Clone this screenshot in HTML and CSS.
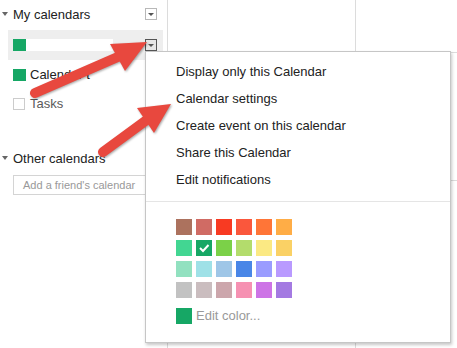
FILE: index.html
```html
<!DOCTYPE html>
<html>
<head>
<meta charset="utf-8">
<link rel="stylesheet" href="styles.css">
</head>
<body>
<div class="app">
  <aside class="sidebar">
    <div class="sec-head">
      <span class="tri"></span>
      <span class="sec-title">My calendars</span>
      <span class="ddbox"></span>
    </div>
    <div class="cal-row selected">
      <span class="chip green"></span>
      <span class="redact"></span>
      <span class="ddbox dark"></span>
    </div>
    <div class="cal-row">
      <span class="chip green"></span>
      <span class="cal-name">Calendar t</span>
    </div>
    <div class="cal-row">
      <span class="chip empty"></span>
      <span class="cal-name muted">Tasks</span>
    </div>
    <div class="sec-head other">
      <span class="tri"></span>
      <span class="sec-title">Other calendars</span>
    </div>
    <div class="friend-input">Add a friend's calendar</div>
  </aside>
  <main class="grid">
    <div class="cell"></div><div class="cell"></div>
    <div class="cell"></div><div class="cell"></div>
    <div class="cell"></div><div class="cell"></div>
  </main>
</div>

<div class="menu">
  <div class="menu-item">Display only this Calendar</div>
  <div class="menu-item">Calendar settings</div>
  <div class="menu-item">Create event on this calendar</div>
  <div class="menu-item">Share this Calendar</div>
  <div class="menu-item">Edit notifications</div>
  <div class="divider"></div>
  <div class="swatches">
    <span class="sw" style="background:#ac725e"></span>
    <span class="sw" style="background:#d06b64"></span>
    <span class="sw" style="background:#f83a22"></span>
    <span class="sw" style="background:#fa573c"></span>
    <span class="sw" style="background:#ff7537"></span>
    <span class="sw" style="background:#ffad46"></span>
    <span class="sw" style="background:#42d692"></span>
    <span class="sw" style="background:#16a765"><svg class="check" width="16" height="16" viewBox="0 0 16 16"><polyline points="4,8 7,11 12.5,5" fill="none" stroke="#fff" stroke-width="2"/></svg></span>
    <span class="sw" style="background:#7bd148"></span>
    <span class="sw" style="background:#b3dc6c"></span>
    <span class="sw" style="background:#fbe983"></span>
    <span class="sw" style="background:#fad165"></span>
    <span class="sw" style="background:#92e1c0"></span>
    <span class="sw" style="background:#9fe1e7"></span>
    <span class="sw" style="background:#9fc6e7"></span>
    <span class="sw" style="background:#4986e7"></span>
    <span class="sw" style="background:#9a9cff"></span>
    <span class="sw" style="background:#b99aff"></span>
    <span class="sw" style="background:#c2c2c2"></span>
    <span class="sw" style="background:#cabdbf"></span>
    <span class="sw" style="background:#cca6ac"></span>
    <span class="sw" style="background:#f691b2"></span>
    <span class="sw" style="background:#cd74e6"></span>
    <span class="sw" style="background:#a47ae2"></span>
  </div>
  <div class="edit-color">
    <span class="sw green"></span>
    <span class="edit-text">Edit color...</span>
  </div>
</div>

<svg class="arrows" width="457" height="348" viewBox="0 0 457 348">
  <g class="arrow">
    <line x1="35" y1="93" x2="120" y2="56" stroke="#e8483e" stroke-width="10" stroke-linecap="round"/>
    <polygon points="147,42 125,71 110,44" fill="#e8483e"/>
  </g>
  <g class="arrow">
    <line x1="103" y1="152" x2="148" y2="119" stroke="#e8483e" stroke-width="10" stroke-linecap="round"/>
    <polygon points="171,104 154,133 137,108" fill="#e8483e"/>
  </g>
</svg>
</body>
</html>
```

FILE: styles.css
```css
* { box-sizing: border-box; }
html, body { margin: 0; padding: 0; }
body {
  width: 457px;
  height: 348px;
  overflow: hidden;
  background: #fff;
  font-family: "Liberation Sans", Arial, sans-serif;
  font-size: 13px;
  color: #222;
  position: relative;
}
.app {
  display: flex;
  width: 457px;
  height: 348px;
  overflow: hidden;
}
.sidebar {
  width: 167px;
  flex: none;
  display: flex;
  flex-direction: column;
}
.sec-head {
  height: 28px;
  margin-bottom: 2px;
  display: flex;
  align-items: center;
  padding-left: 2px;
  padding-right: 10px;
}
.sec-head.other {
  margin-top: 26px;
  margin-bottom: 1px;
}
.tri {
  width: 0;
  height: 0;
  border-left: 3px solid transparent;
  border-right: 3px solid transparent;
  border-top: 4px solid #666;
  margin-right: 5px;
}
.sec-title {
  flex: 1;
  color: #222;
  white-space: nowrap;
}
.ddbox {
  width: 12px;
  height: 12px;
  border: 1px solid #b8b8b8;
  background: #fff;
  display: flex;
  align-items: center;
  justify-content: center;
  flex: none;
}
.ddbox::after {
  content: "";
  width: 0;
  height: 0;
  border-left: 3px solid transparent;
  border-right: 3px solid transparent;
  border-top: 3px solid #555;
  margin-top: 1px;
}
.ddbox.dark {
  border-color: #555;
  background: #e6e6e6;
  margin-top: -1px;
}
.cal-row {
  height: 29px;
  display: flex;
  align-items: center;
  margin-left: 8px;
  margin-right: 4px;
  padding-left: 5px;
  padding-right: 6px;
}
.cal-row.selected {
  height: 30px;
  background: #eee;
}
.chip {
  width: 13px;
  height: 12px;
  flex: none;
}
.chip.green { background: #16a765; }
.chip.empty {
  width: 12px;
  border: 1px solid #ccc;
  background: #fff;
}
.redact {
  width: 87px;
  height: 12px;
  background: #fff;
  flex: none;
}
.selected .ddbox { margin-left: auto; }
.cal-name {
  margin-left: 4px;
  color: #222;
  white-space: nowrap;
}
.chip.empty + .cal-name { margin-left: 5px; }
.cal-name.muted { color: #5a5a5a; }
.friend-input {
  margin-top: 2px;
  margin-left: 13px;
  width: 150px;
  height: 20px;
  border: 1px solid #d4d4d4;
  padding-left: 9px;
  font-size: 11px;
  line-height: 18px;
  color: #999;
  white-space: nowrap;
}
.grid {
  flex: 1;
  min-width: 0;
  border-left: 1px solid #dcdcdc;
  display: grid;
  grid-template-columns: 187px 1fr;
  grid-template-rows: 52px 127px 1fr;
  gap: 1px;
  background: #dcdcdc;
}
.cell { background: #fff; }

.menu {
  position: absolute;
  left: 145px;
  top: 51px;
  width: 306px;
  height: 292px;
  background: #fff;
  border: 1px solid #c6c6c6;
  box-shadow: 1px 2px 3px rgba(0,0,0,0.22);
  padding-top: 6px;
}
.menu-item {
  height: 27px;
  line-height: 27px;
  padding-left: 30px;
  color: #222;
  white-space: nowrap;
}
.divider {
  margin-top: 8px;
  height: 1px;
  background: #e5e5e5;
}
.swatches {
  margin-top: 17px;
  margin-left: 30px;
  display: grid;
  grid-template-columns: repeat(6, 16px);
  grid-auto-rows: 16px;
  column-gap: 4px;
  row-gap: 5px;
}
.sw {
  display: block;
  width: 16px;
  height: 16px;
}
.check { display: block; }
.edit-color {
  margin-top: 10px;
  margin-left: 30px;
  display: flex;
  align-items: center;
  height: 16px;
}
.sw.green { background: #16a765; flex: none; }
.edit-text {
  margin-left: 4px;
  color: #999;
  line-height: 16px;
}
.arrows {
  position: absolute;
  left: 0;
  top: 0;
  pointer-events: none;
}
.arrow {
  filter: drop-shadow(1px 1px 1px rgba(0,0,0,0.35));
}
```
